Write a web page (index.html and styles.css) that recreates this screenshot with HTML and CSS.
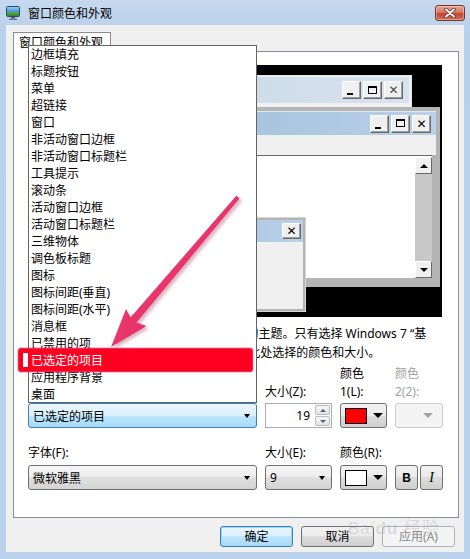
FILE: index.html
```html
<!DOCTYPE html>
<html lang="zh-CN">
<head>
    <meta charset="UTF-8">
    <meta name="viewport" content="width=device-width, initial-scale=1.0">
    <title>窗口颜色和外观</title>
    <link rel="stylesheet" href="styles.css">
</head>
<body>
    <div class="window">
        <div class="titlebar">
            <svg class="app-icon" viewBox="0 0 15 14" width="15" height="14">
                <defs>
                    <linearGradient id="scr" x1="0" y1="0" x2="0" y2="1">
                        <stop offset="0" stop-color="#9fd3f5"/>
                        <stop offset="0.55" stop-color="#3d8fd6"/>
                        <stop offset="0.56" stop-color="#5fb04a"/>
                        <stop offset="1" stop-color="#2f7d2a"/>
                    </linearGradient>
                </defs>
                <rect x="0.5" y="0.5" width="13" height="10" rx="1" fill="url(#scr)" stroke="#2b4a6e"/>
                <rect x="5" y="11" width="4" height="1.5" fill="#4a5a6a"/>
                <rect x="3" y="12.5" width="8" height="1.5" fill="#6b7b8b"/>
            </svg>
            <span class="title">窗口颜色和外观</span>
            <div class="close-btn">
                <svg viewBox="0 0 12 10" width="12" height="10">
                    <path d="M2 1.5 L10 8.5 M10 1.5 L2 8.5" stroke="#6e2a1e" stroke-width="3.6" stroke-linecap="round"/>
                    <path d="M2 1.5 L10 8.5 M10 1.5 L2 8.5" stroke="#fff" stroke-width="2" stroke-linecap="round"/>
                </svg>
            </div>
        </div>

        <div class="client">
            <div class="tabs">
                <div class="tab">窗口颜色和外观</div>
            </div>
            <div class="panel">
                <div class="preview">
                    <div class="pwin inactive">
                        <div class="caption">
                            <span class="cap-text">非活动窗口</span>
                            <span class="cap-btn"><i class="ico-min"></i></span>
                            <span class="cap-btn"><i class="ico-max"></i></span>
                            <span class="cap-btn"><i class="ico-close">✕</i></span>
                        </div>
                    </div>
                    <div class="pwin active">
                        <div class="caption">
                            <span class="cap-text">活动窗口</span>
                            <span class="cap-btn"><i class="ico-min"></i></span>
                            <span class="cap-btn"><i class="ico-max"></i></span>
                            <span class="cap-btn"><i class="ico-close">✕</i></span>
                        </div>
                        <div class="menubar">正常 &nbsp;已禁用 &nbsp;已选定</div>
                        <div class="textarea">
                            <div class="text">窗口文字</div>
                            <div class="scrollbar">
                                <span class="sb-btn"><i class="tri up"></i></span>
                                <span class="sb-track"></span>
                                <span class="sb-btn"><i class="tri down"></i></span>
                            </div>
                        </div>
                    </div>
                    <div class="pwin msgbox">
                        <div class="caption">
                            <span class="cap-text">消息框</span>
                            <span class="cap-btn"><i class="ico-close">✕</i></span>
                        </div>
                        <div class="msg-body">消息文字</div>
                    </div>
                </div>

                <div class="desc">
                    <div class="line">此设置不适用于Aero主题和高对比度以外的主题。只有选择 Windows 7 “基</div>
                    <div class="line">本”主题或高对比度主题时，才会应用您在此处选择的颜色和大小。</div>
                </div>

                <div class="row item-row">
                    <div class="field">
                        <div class="labels"><span>项目(I):</span></div>
                        <div class="combo hot"><span class="value">已选定的项目</span><i class="caret"></i></div>
                    </div>
                    <div class="field">
                        <div class="labels"><span>大小(Z):</span></div>
                        <div class="spin">
                            <span class="spin-val">19</span>
                            <span class="spin-btns">
                                <b class="spin-btn"><i class="tri small up"></i></b>
                                <b class="spin-btn"><i class="tri small down"></i></b>
                            </span>
                        </div>
                    </div>
                    <div class="field">
                        <div class="labels"><span>颜色</span><span>1(L):</span></div>
                        <div class="color-btn"><span class="swatch" style="background:#ff0000"></span><i class="caret big"></i></div>
                    </div>
                    <div class="field disabled">
                        <div class="labels"><span>颜色</span><span>2(2):</span></div>
                        <div class="color-btn off"><i class="caret big"></i></div>
                    </div>
                </div>

                <div class="row font-row">
                    <div class="field">
                        <div class="labels one"><span>字体(F):</span></div>
                        <div class="combo"><span class="value">微软雅黑</span><i class="caret"></i></div>
                    </div>
                    <div class="field">
                        <div class="labels one"><span>大小(E):</span></div>
                        <div class="combo"><span class="value">9</span><i class="caret"></i></div>
                    </div>
                    <div class="field">
                        <div class="labels one"><span>颜色(R):</span></div>
                        <div class="color-btn"><span class="swatch" style="background:#ffffff"></span><i class="caret big"></i></div>
                    </div>
                    <div class="field">
                        <div class="labels one"></div>
                        <div class="style-btns">
                            <span class="sbtn bold">B</span>
                            <span class="sbtn italic">I</span>
                        </div>
                    </div>
                </div>
            </div>

            <div class="actions">
                <span class="btn default">确定</span>
                <span class="btn">取消</span>
                <span class="btn off">应用(A)</span>
            </div>
        </div>

        <ul class="listbox">
            <li>边框填充</li>
            <li>标题按钮</li>
            <li>菜单</li>
            <li>超链接</li>
            <li>窗口</li>
            <li>非活动窗口边框</li>
            <li>非活动窗口标题栏</li>
            <li>工具提示</li>
            <li>滚动条</li>
            <li>活动窗口边框</li>
            <li>活动窗口标题栏</li>
            <li>三维物体</li>
            <li>调色板标题</li>
            <li>图标</li>
            <li>图标间距(垂直)</li>
            <li>图标间距(水平)</li>
            <li>消息框</li>
            <li>已禁用的项</li>
            <li>已选定的项目</li>
            <li>应用程序背景</li>
            <li>桌面</li>
        </ul>

        <div class="mark"><i class="mark-caret"></i>已选定的项目</div>

        <svg class="arrow" viewBox="0 0 470 559" width="470" height="559">
            <defs>
                <filter id="soft" x="-20%" y="-20%" width="140%" height="140%">
                    <feGaussianBlur stdDeviation="1.6"/>
                </filter>
                <linearGradient id="pink" x1="0" y1="0" x2="1" y2="1">
                    <stop offset="0" stop-color="#f0467a"/>
                    <stop offset="1" stop-color="#e0245a"/>
                </linearGradient>
            </defs>
            <polygon transform="translate(2.5 2.5)" filter="url(#soft)" fill="rgba(150,40,80,0.35)"
                points="239.5,198.5 136.5,322.5 146.5,326 111,347 126,309 130.5,317.5 236.5,195.5"/>
            <polygon fill="url(#pink)"
                points="239.5,198.5 136.5,322.5 146.5,326 111,347 126,309 130.5,317.5 236.5,195.5"/>
        </svg>

        <div class="watermark">Bai<b>du</b> 经验</div>
    </div>
</body>
</html>
```

FILE: styles.css
```css
* {
    box-sizing: border-box;
}
body {
    margin: 0;
    background: #b9d1ea;
    font-family: "Noto Sans", "Noto Sans CJK SC", "Microsoft YaHei", sans-serif;
    font-size: 12px;
    color: #000;
}
.window {
    position: relative;
    width: 470px;
    height: 559px;
    overflow: hidden;
    background: linear-gradient(#c6d9ee, #b9d1ea 30px, #bad2eb);
}

/* title bar */
.titlebar {
    height: 25px;
    display: flex;
    align-items: center;
    padding: 0 5px 0 6px;
}
.app-icon {
    display: block;
}
.title {
    margin-left: 7px;
    line-height: 14px;
    margin-top: 2px;
}
.close-btn {
    margin-left: auto;
    align-self: flex-start;
    margin-top: 5px;
    width: 30px;
    height: 16px;
    border: 1px solid #7a3429;
    border-radius: 3px;
    background: linear-gradient(#e7a497, #d77a66 45%, #c2452c 55%, #d0705a);
    box-shadow: inset 0 0 0 1px rgba(255, 255, 255, 0.35);
    display: flex;
    align-items: center;
    justify-content: center;
}

/* client area */
.client {
    height: 527px;
    margin: 0 6px;
    background: #f0f0f0;
    padding: 7px 5px 0 7px;
}
.tabs {
    height: 19px;
    display: flex;
}
.tab {
    position: relative;
    width: 98px;
    height: 20px;
    border: 1px solid #898c95;
    border-bottom: none;
    background: #fff;
    padding-left: 5px;
    line-height: 19px;
}
.panel {
    height: 467px;
    border: 1px solid #898c95;
    background: #fff;
    padding: 13px 0 0 14px;
    overflow: hidden;
}

/* preview */
.preview {
    position: relative;
    width: 414px;
    height: 252px;
    background: #000;
    overflow: hidden;
}
.pwin {
    position: absolute;
    display: flex;
    flex-direction: column;
}
.pwin.inactive {
    left: 10px;
    top: 10px;
    width: 374px;
    height: 110px;
    background: #f0f0f0;
    border: 1px solid #e4e4e4;
    padding: 1px 2px;
}
.pwin.active {
    left: 20px;
    top: 42px;
    width: 392px;
    height: 180px;
    background: #b4b4b4;
    padding: 4px 4px 9px 4px;
}
.pwin.msgbox {
    left: 60px;
    top: 152px;
    width: 218px;
    height: 95px;
    background: #b4b4b4;
    padding: 2px;
    border: 1px solid #d6d6d6;
}
.caption {
    display: flex;
    align-items: center;
    gap: 2px;
    height: 26px;
    padding: 0 6px 0 4px;
    background: linear-gradient(to right, #c3d1e0, #d7e3f0);
    color: #434e54;
}
.active .caption {
    height: 24px;
    padding-right: 5px;
    background: linear-gradient(to right, #99b4d1, #b9d1ea);
    color: #000;
    border-top: 1px solid #dfe9f5;
}
.msgbox .caption {
    height: 22px;
    padding-right: 2px;
    background: linear-gradient(to right, #99b4d1, #b9d1ea);
    color: #000;
}
.cap-text {
    margin-right: auto;
}
.cap-btn {
    width: 19px;
    height: 18px;
    background: #f0f0f0;
    border: 1px solid;
    border-color: #fff #696969 #696969 #fff;
    box-shadow: inset -1px -1px #a0a0a0;
    display: flex;
    align-items: center;
    justify-content: center;
    position: relative;
}
.msgbox .cap-btn {
    height: 16px;
}
.ico-min {
    position: absolute;
    left: 4px;
    bottom: 3px;
    width: 6px;
    height: 2px;
    background: #000;
}
.ico-max {
    width: 9px;
    height: 8px;
    border: 1px solid #000;
    border-top-width: 2px;
    margin-top: -1px;
}
.ico-close {
    font-style: normal;
    font-weight: bold;
    font-size: 12px;
    line-height: 12px;
    font-family: "DejaVu Sans", sans-serif;
}
.menubar {
    height: 20px;
    background: #f0f0f0;
    padding-left: 6px;
    line-height: 20px;
}
.textarea {
    flex: 1;
    display: flex;
    margin-right: 4px;
    background: #fff;
    border-top: 1px solid #696969;
    border-left: 1px solid #696969;
    padding-top: 1px;
}
.text {
    flex: 1;
    padding: 2px 4px;
}
.scrollbar {
    width: 17px;
    display: flex;
    flex-direction: column;
    background: #c8c8c8;
}
.sb-track {
    flex: 1;
}
.sb-btn {
    height: 17px;
    background: #f0f0f0;
    border: 1px solid;
    border-color: #fff #696969 #696969 #fff;
    display: flex;
    align-items: center;
    justify-content: center;
}
.tri {
    width: 0;
    height: 0;
    border-left: 4px solid transparent;
    border-right: 4px solid transparent;
}
.tri.up {
    border-bottom: 4px solid #000;
}
.tri.down {
    border-top: 4px solid #000;
}
.tri.small {
    border-left-width: 3px;
    border-right-width: 3px;
}
.tri.small.up {
    border-bottom: 3px solid #4d6185;
}
.tri.small.down {
    border-top: 3px solid #4d6185;
}
.msg-body {
    flex: 1;
    background: #f0f0f0;
    padding: 8px;
}

/* description */
.desc {
    margin-top: 7px;
}
.desc .line {
    line-height: 19px;
    white-space: nowrap;
}

/* fields */
.row {
    display: grid;
    grid-template-columns: 229px 67px 47px 48px;
    column-gap: 8px;
}
.item-row {
    margin-top: 3px;
}
.font-row {
    margin-top: 16px;
}
.labels {
    height: 36px;
    display: flex;
    flex-direction: column;
    justify-content: flex-end;
    line-height: 18px;
    margin-bottom: 2px;
}
.labels.one {
    height: 18px;
    margin-bottom: 3px;
}
.field.disabled .labels {
    color: #a0a0a0;
}
.combo {
    height: 25px;
    border: 1px solid #707070;
    border-radius: 3px;
    background: linear-gradient(#f6f6f6, #ececec 50%, #dfdfdf 50%, #d4d4d4);
    display: flex;
    align-items: center;
    padding: 0 6px 0 4px;
}
.combo.hot {
    border-color: #3c7fb1;
    background: linear-gradient(#eaf6fd, #d9f0fc 50%, #bee6fd 50%, #a7d9f5);
}
.combo .value {
    flex: 1;
}
.caret {
    width: 0;
    height: 0;
    border-left: 3.5px solid transparent;
    border-right: 3.5px solid transparent;
    border-top: 4px solid #000;
}
.caret.big {
    border-left-width: 5px;
    border-right-width: 5px;
    border-top-width: 5px;
}
.spin {
    height: 25px;
    border: 1px solid #abadb3;
    background: #fff;
    display: flex;
    align-items: center;
    padding: 1px;
}
.spin-val {
    flex: 1;
    text-align: right;
    padding-right: 5px;
}
.spin-btns {
    width: 15px;
    height: 100%;
    display: flex;
    flex-direction: column;
    gap: 1px;
}
.spin-btn {
    flex: 1;
    border: 1px solid #b8bcc2;
    border-radius: 2px;
    background: linear-gradient(#f7f7f7, #e3e3e3);
    display: flex;
    align-items: center;
    justify-content: center;
}
.color-btn {
    height: 25px;
    margin-top: 2px;
    border: 1px solid #707070;
    border-radius: 3px;
    background: linear-gradient(#f2f2f2, #ebebeb 50%, #dddddd 50%, #cfcfcf);
    display: flex;
    align-items: center;
    padding-left: 4px;
    gap: 6px;
}
.swatch {
    width: 22px;
    height: 16px;
    border: 1px solid #000;
}
.color-btn.off {
    border-color: #c9cbcd;
    background: #f4f4f4;
    justify-content: flex-end;
    padding-right: 9px;
}
.color-btn.off .caret {
    border-top-color: #a3a3a3;
}
.style-btns {
    display: flex;
    gap: 2px;
    margin-top: 1px;
}
.sbtn {
    width: 23px;
    height: 25px;
    border: 1px solid #707070;
    border-radius: 3px;
    background: linear-gradient(#f2f2f2, #ebebeb 50%, #dddddd 50%, #cfcfcf);
    display: flex;
    align-items: center;
    justify-content: center;
}
.sbtn.bold {
    font-family: "Liberation Sans", sans-serif;
    font-weight: bold;
    font-size: 12px;
}
.sbtn.italic {
    font-family: "Liberation Serif", serif;
    font-style: italic;
    font-size: 14px;
}

/* dialog buttons */
.actions {
    display: flex;
    justify-content: flex-end;
    gap: 8px;
    margin-top: 8px;
    padding-right: 4px;
}
.btn {
    width: 73px;
    height: 21px;
    border: 1px solid #707070;
    border-radius: 3px;
    background: linear-gradient(#f2f2f2, #ebebeb 50%, #dddddd 50%, #cfcfcf);
    text-align: center;
    line-height: 19px;
}
.btn.default {
    border-color: #3c7fb1;
    background: linear-gradient(#eaf6fd, #d9f0fc 50%, #bee6fd 50%, #a7d9f5);
    box-shadow: inset 0 0 0 1px #9fd6f5;
}
.btn.off {
    border-color: #adb2b5;
    background: #f4f4f4;
    color: #8a8a8a;
}

/* open drop-down list */
.listbox {
    position: absolute;
    z-index: 2;
    left: 28px;
    top: 45px;
    width: 229px;
    height: 358px;
    margin: 0;
    padding: 0;
    list-style: none;
    background: #fff;
    border: 1px solid #646464;
}
.listbox li {
    height: 17px;
    line-height: 17px;
    padding-left: 2px;
    white-space: nowrap;
}

/* annotation */
.mark {
    position: absolute;
    z-index: 3;
    left: 18px;
    top: 348px;
    width: 235px;
    height: 24px;
    background: #ff0020;
    border: 1px solid #e0305a;
    border-radius: 3px;
    box-shadow: 0 0 2px rgba(210, 30, 80, 0.8);
    color: #fff;
    display: flex;
    align-items: center;
    padding-left: 12px;
    line-height: 17px;
}
.mark-caret {
    position: absolute;
    left: 4px;
    top: 4px;
    width: 5px;
    height: 14px;
    background: #fff;
}
.arrow {
    position: absolute;
    z-index: 3;
    left: 0;
    top: 0;
    pointer-events: none;
}
.watermark {
    position: absolute;
    z-index: 3;
    left: 348px;
    top: 514px;
    font-family: "Liberation Sans", sans-serif;
    font-size: 17px;
    color: rgba(170, 170, 170, 0.35);
    letter-spacing: 1px;
    pointer-events: none;
}
.watermark b {
    font-weight: bold;
}
```
